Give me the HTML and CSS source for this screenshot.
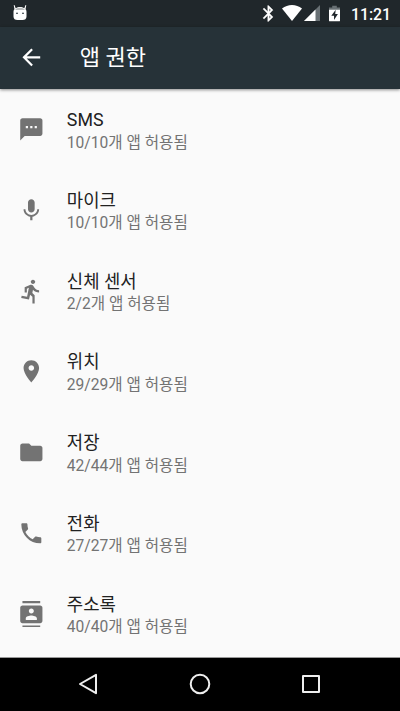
FILE: index.html
```html
<!DOCTYPE html>
<html lang="ko">
<head>
<meta charset="utf-8">
<title>앱 권한</title>
<link rel="stylesheet" href="styles.css">
</head>
<body>
<div class="screen">
  <div class="status">
    <svg class="debug" viewBox="0 0 16 18"><path fill="#fff" d="M2.500 1l1.200 3.200C5 3.300 6.500 3 8 3s3 .3 4.300 1.200L13.500 1l.8.3-.8 4c.8.8 1 1.600 1 2.700v4.500c0 2.500-1.500 3.500-4 3.500h-5c-2.500 0-4-1-4-3.500V8c0-1.100.2-1.900 1-2.700l-.8-4z"/><path fill="#b8bbbc" d="M3.500 5Q8 2.500 12.500 5v1h-9z"/><path fill="#263238" d="M4 8.800h2v1H4zm6 0h2v1h-2z"/></svg>
    <div class="indicators">
      <svg class="bluetooth" viewBox="0 0 24 24"><path fill="#fff" stroke="#fff" stroke-width=".4" d="M17.710 7.710L12 2h-1v7.590L6.410 5 5 6.410 10.590 12 5 17.590 6.410 19 11 14.410V22h1l5.710-5.710-4.300-4.290 4.300-4.290zM13 5.830l1.880 1.880L13 9.590V5.830zm1.880 10.460L13 18.170v-3.760l1.880 1.880z"/></svg>
      <svg class="wifi" viewBox="0 0 20 16"><path fill="#fff" d="M10 16L0 3.500Q4.500 0 10 0t10 3.500z"/></svg>
      <svg class="cell" viewBox="0 0 16 16"><path fill="#687074" d="M16 0v16H0z"/><path fill="#fff" d="M11.500 4.500V16H0z"/></svg>
      <svg class="battery" viewBox="0 0 12 17"><path fill="#687074" d="M3.500 0h5v2H12v3H0V2h3.500z"/><path fill="#fff" d="M0 4.500h12V16a1 1 0 0 1-1 1H1a1 1 0 0 1-1-1z"/><path fill="#20272b" d="M7.300 4.500L2.500 11h3v4.500L9.700 9H6.800z"/></svg>
      <span class="clock">11:21</span>
    </div>
  </div>
  <header class="toolbar">
    <svg class="icon" viewBox="0 0 24 24"><path fill="#fff" d="M20 11H7.830l5.590-5.590L12 4l-8 8 8 8 1.410-1.410L7.830 13H20v-2z"/></svg>
    <h1 class="heading">앱 권한</h1>
  </header>
  <main class="list">
    <div class="row">
      <svg class="icon" viewBox="0 0 24 24"><path d="M20 2H4c-1.100 0-1.990.9-1.990 2L2 22l4-4h14c1.100 0 2-.9 2-2V4c0-1.100-.9-2-2-2zM9 11H7V9h2v2zm4 0h-2V9h2v2zm4 0h-2V9h2v2z"/></svg>
      <div class="text"><div class="name">SMS</div><div class="summary">10/10개 앱 허용됨</div></div>
    </div>
    <div class="row">
      <svg class="icon" viewBox="0 0 24 24"><path d="M12 14c1.660 0 2.990-1.340 2.990-3L15 5c0-1.660-1.340-3-3-3S9 3.340 9 5v6c0 1.660 1.340 3 3 3zm5.300-3c0 3-2.540 5.100-5.300 5.100S6.700 14 6.700 11H5c0 3.410 2.720 6.230 6 6.720V21h2v-3.280c3.280-.48 6-3.300 6-6.720h-1.700z"/></svg>
      <div class="text"><div class="name">마이크</div><div class="summary">10/10개 앱 허용됨</div></div>
    </div>
    <div class="row">
      <svg class="icon" viewBox="0 0 24 24"><path d="M13.490 5.480c1.100 0 2-.9 2-2s-.9-2-2-2-2 .9-2 2 .9 2 2 2zm-3.600 13.900l1-4.400 2.100 2v6h2v-7.500l-2.100-2 .6-3c1.300 1.500 3.300 2.500 5.500 2.500v-2c-1.900 0-3.500-1-4.300-2.400l-1-1.600c-.4-.6-1-1-1.700-1-.3 0-.5.1-.8.1l-5.200 2.200v4.700h2v-3.400l1.800-.7-1.600 8.100-4.900-1-.4 2 7 1.400z"/></svg>
      <div class="text"><div class="name">신체 센서</div><div class="summary">2/2개 앱 허용됨</div></div>
    </div>
    <div class="row">
      <svg class="icon" viewBox="0 0 24 24"><path d="M12 2C8.130 2 5 5.130 5 9c0 5.250 7 13 7 13s7-7.750 7-13c0-3.870-3.130-7-7-7zm0 9.500c-1.380 0-2.500-1.120-2.500-2.500s1.120-2.500 2.500-2.500 2.500 1.120 2.500 2.500-1.120 2.500-2.500 2.500z"/></svg>
      <div class="text"><div class="name">위치</div><div class="summary">29/29개 앱 허용됨</div></div>
    </div>
    <div class="row">
      <svg class="icon" viewBox="0 0 24 24"><path d="M10 4H4c-1.100 0-1.990.9-1.990 2L2 18c0 1.100.9 2 2 2h16c1.100 0 2-.9 2-2V8c0-1.100-.9-2-2-2h-8l-2-2z"/></svg>
      <div class="text"><div class="name">저장</div><div class="summary">42/44개 앱 허용됨</div></div>
    </div>
    <div class="row">
      <svg class="icon" viewBox="0 0 24 24"><path d="M6.620 10.790c1.440 2.830 3.760 5.140 6.590 6.590l2.200-2.200c.27-.27.67-.36 1.020-.24 1.120.37 2.330.57 3.570.57.55 0 1 .45 1 1V20c0 .55-.45 1-1 1-9.390 0-17-7.610-17-17 0-.55.45-1 1-1h3.500c.55 0 1 .45 1 1 0 1.250.2 2.450.57 3.570.11.35.03.74-.25 1.020l-2.200 2.200z"/></svg>
      <div class="text"><div class="name">전화</div><div class="summary">27/27개 앱 허용됨</div></div>
    </div>
    <div class="row">
      <svg class="icon" viewBox="0 0 24 24"><path d="M20 0H4v2h16V0zM4 24h16v-2H4v2zM20 4H4c-1.100 0-2 .9-2 2v12c0 1.100.9 2 2 2h16c1.100 0 2-.9 2-2V6c0-1.100-.9-2-2-2zm-8 2.750c1.240 0 2.250 1.010 2.250 2.250s-1.010 2.250-2.250 2.250S9.750 10.240 9.750 9 10.760 6.750 12 6.750zM17 17H7v-1.500c0-1.670 3.330-2.500 5-2.500s5 .83 5 2.500V17z"/></svg>
      <div class="text"><div class="name">주소록</div><div class="summary">40/40개 앱 허용됨</div></div>
    </div>
  </main>
  <nav class="navbar">
    <svg viewBox="0 0 24 24"><path d="M19 2.800v18.400L3 12z"/></svg>
    <svg viewBox="0 0 24 24"><circle cx="12" cy="12" r="9.300"/></svg>
    <svg viewBox="0 0 24 24"><path d="M4 4h16v16H4z"/></svg>
  </nav>
</div>
</body>
</html>
```

FILE: styles.css
```css
body {
  margin: 0;
  font-family: Roboto, "Noto Sans CJK KR", sans-serif;
}
.screen {
  display: flex;
  flex-direction: column;
  width: 400px;
  height: 711px;
  overflow: hidden;
  background: #fafafa;
}
.status {
  display: flex;
  flex: none;
  justify-content: space-between;
  box-sizing: border-box;
  height: 27px;
  padding: 0 9px 0 12px;
  background: #20272b;
}
.debug {
  width: 16px;
  height: 18px;
  margin-top: 4px;
}
.indicators {
  display: flex;
  align-items: flex-start;
}
.bluetooth {
  width: 19px;
  height: 19px;
  margin: 4px 4px 0 0;
}
.wifi {
  width: 20px;
  height: 16px;
  margin: 5px 2px 0 0;
}
.cell {
  width: 16px;
  height: 16px;
  margin: 5px 9px 0 0;
}
.battery {
  width: 11px;
  height: 17px;
  margin: 5px 11px 0 0;
}
.clock {
  width: 40px;
  color: #fff;
  font-size: 15.800px;
  font-weight: 500;
  line-height: 29px;
}
.toolbar {
  display: flex;
  flex: none;
  align-items: center;
  height: 62px;
  padding-left: 17.800px;
  background: #263238;
  box-shadow: 0 1px 3px rgba(0, 0, 0, .45);
}
.toolbar .icon {
  margin-bottom: 1px;
}
.icon {
  flex: none;
  width: 26.670px;
  height: 26.670px;
  fill: #737373;
}
.heading {
  margin: 0 0 0 35.400px;
  color: #fff;
  font-size: 22px;
  font-weight: 400;
  line-height: 32px;
}
.list {
  flex: 1;
}
.row {
  display: flex;
  align-items: center;
  height: 80.750px;
  padding-left: 17.800px;
}
.text {
  padding-top: 3px;
  margin-left: 22.400px;
  white-space: nowrap;
}
.name {
  color: #212121;
  font-size: 17.800px;
  line-height: 23.500px;
}
.summary {
  color: #737373;
  font-size: 15.600px;
  line-height: 22px;
}
.navbar {
  display: flex;
  flex: none;
  align-items: center;
  justify-content: center;
  gap: 87px;
  box-sizing: border-box;
  height: 54px;
  padding-bottom: 1px;
  background: #000;
  border-top: 1px solid #999;
}
.navbar svg {
  width: 24px;
  height: 24px;
  fill: none;
  stroke: #eee;
  stroke-width: 2;
  stroke-linejoin: round;
}
```
